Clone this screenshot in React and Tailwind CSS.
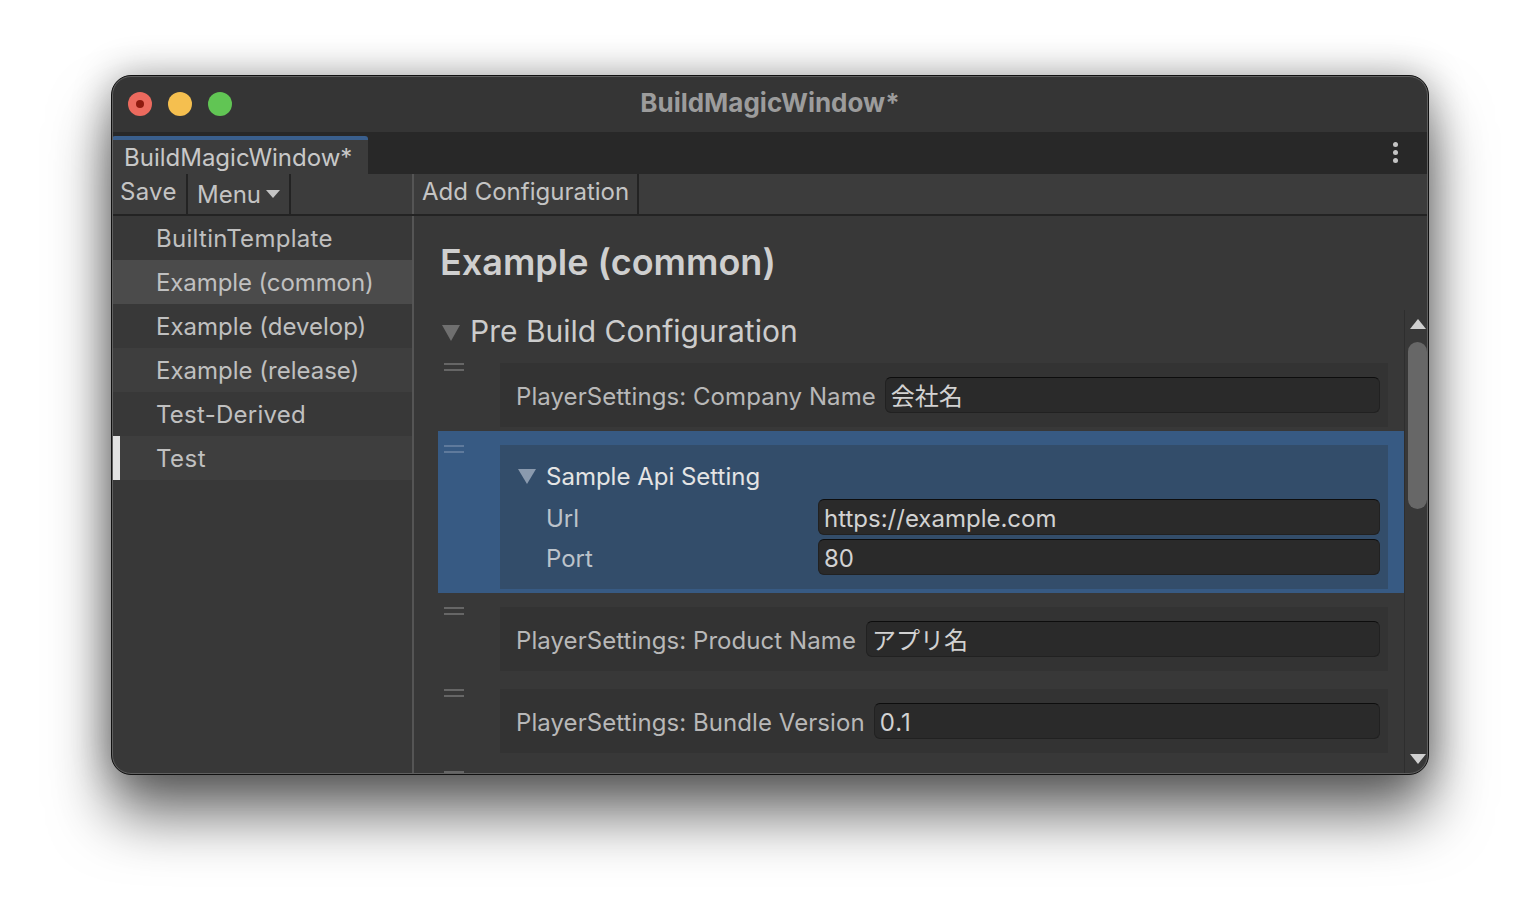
const templates = [
  { name: 'BuiltinTemplate', bg: 'bg-[#383838]', track: 'tracking-[0.3px]' },
  { name: 'Example (common)', bg: 'bg-[#4b4b4b]', track: 'tracking-[-0.1px]' },
  { name: 'Example (develop)', bg: 'bg-[#383838]', track: '' },
  { name: 'Example (release)', bg: 'bg-[#3e3e3e]', track: '' },
  { name: 'Test-Derived', bg: 'bg-[#383838]', track: 'tracking-[0.25px]' },
  { name: 'Test', bg: 'bg-[#3e3e3e]', track: 'tracking-[0.5px]', marked: true },
]

function Triangle({ className }) {
  return (
    <svg viewBox="0 0 18 16" preserveAspectRatio="none" className={className}>
      <path d="M0 0H18L9 16Z" fill="currentColor" />
    </svg>
  )
}

function Handle() {
  return (
    <div className="w-[20px] flex flex-col gap-[4px]">
      <div className="h-[2px] bg-[#666666]" />
      <div className="h-[2px] bg-[#666666]" />
    </div>
  )
}

function TextField({ value, className = '' }) {
  return (
    <div className={`h-[36px] rounded-[6px] bg-[#2a2a2a] border border-[#212121] border-t-[#0d0d0d] px-[5px] pt-[4px] flex items-center text-[#d2d2d2] ${className}`}>
      {value}
    </div>
  )
}

function SettingRow({ label, value, mt, valueClass, labelGap = 'mr-[9px]' }) {
  return (
    <div className={`flex ${mt}`}>
      <div className="w-[62px] pl-[6px] shrink-0">
        <Handle />
      </div>
      <div className="w-[888px] h-[64px] bg-[#333333] flex items-center pl-[16px] pr-[8px]">
        <span className={`text-[#b8b8b8] whitespace-nowrap pt-[4px] tracking-[0.07px] ${labelGap}`}>{label}</span>
        <TextField value={value} className={`flex-1 ${valueClass}`} />
      </div>
    </div>
  )
}

export default function App() {
  return (
    <div
      className="h-[922px] bg-white pt-[75px] pl-[111px] text-[24px] leading-none"
      style={{ fontFamily: 'Inter, "Noto Sans CJK JP", sans-serif' }}
    >
      <div className="relative w-[1318px] h-[700px] rounded-[20px] bg-[#383838] border border-[#111111] overflow-hidden flex flex-col shadow-[0_40px_60px_rgba(0,0,0,0.58),0_0_38px_rgba(0,0,0,0.32)]">
        {/* title bar */}
        <div className="relative h-[56px] shrink-0 bg-[#353535] flex items-center pl-[16px] gap-[16px]">
          <div className="w-[24px] h-[24px] rounded-full bg-[#ec6a5e] flex items-center justify-center">
            <div className="w-[8px] h-[8px] rounded-full bg-[#8f1a0f]" />
          </div>
          <div className="w-[24px] h-[24px] rounded-full bg-[#f5bf4f]" />
          <div className="w-[24px] h-[24px] rounded-full bg-[#61c554]" />
          <div className="absolute inset-x-0 top-[14px] text-center text-[26px] font-bold text-[#9c9c9c]">
            BuildMagicWindow*
          </div>
        </div>

        {/* tab strip */}
        <div className="h-[42px] shrink-0 bg-[#282828] flex items-end justify-between">
          <div className="w-[256px] h-[38px] bg-[#3c3c3c] border-t-[4px] border-[#3a5f8d] rounded-t-[3px] pl-[12px] pt-[6px] text-[#c8c8c8] whitespace-nowrap">
            BuildMagicWindow*
          </div>
          <div className="flex flex-col gap-[3px] mr-[30px] mb-[11px]">
            <div className="w-[5px] h-[5px] rounded-full bg-[#c4c4c4]" />
            <div className="w-[5px] h-[5px] rounded-full bg-[#c4c4c4]" />
            <div className="w-[5px] h-[5px] rounded-full bg-[#c4c4c4]" />
          </div>
        </div>

        {/* toolbar */}
        <div className="h-[42px] shrink-0 bg-[#3c3c3c] border-b-2 border-[#232323] flex text-[#c4c4c4]">
          <div className="w-[300px] flex shrink-0">
            <div className="w-[76px] pl-[8px] pt-[6px] border-r-2 border-[#232323] tracking-[0.3px]">Save</div>
            <div className="w-[103px] pl-[9px] pt-[9px] border-r-2 border-[#232323] flex">
              <span>Menu</span>
              <Triangle className="w-[14px] h-[8px] ml-[5px] mt-[7px] text-[#c4c4c4]" />
            </div>
          </div>
          <div className="w-[2px] bg-[#555555]" />
          <div className="w-[225px] pl-[8px] pt-[6px] border-r-2 border-[#232323] whitespace-nowrap">Add Configuration</div>
        </div>

        <div className="flex-1 min-h-0 flex">
          {/* template list */}
          <div className="w-[300px] shrink-0 text-[#c0c0c0]">
            {templates.map((t) => (
              <div key={t.name} className={`h-[44px] flex items-center ${t.bg} ${t.track}`}>
                <div className={`w-[8px] h-full mr-[36px] ${t.marked ? 'bg-[#e2e2e2]' : ''}`} />
                <span className="pt-[2px]">{t.name}</span>
              </div>
            ))}
          </div>
          <div className="w-[2px] shrink-0 bg-[#555555]" />

          {/* configuration pane */}
          <div className="flex-1 min-w-0 overflow-hidden">
            <div className="pl-[26px] pt-[28px] h-[94px] text-[36px] font-semibold text-[#cfcfcf] whitespace-nowrap">
              Example (common)
            </div>
            <div className="flex">
              <div className="w-[990px] shrink-0">
                <div className="h-[53px] flex items-start pl-[28px] pt-[6px] text-[#cccccc] text-[30px]">
                  <Triangle className="w-[18px] h-[16px] mt-[9px] mr-[10px] text-[#6f6f6f]" />
                  <span className="whitespace-nowrap">Pre Build Configuration</span>
                </div>
                <div className="pl-[24px]">
                  <SettingRow label="PlayerSettings: Company Name" value="会社名" />
                  <div className="mt-[4px] w-[966px] h-[162px] bg-[#375a83] flex">
                    <div className="w-[62px] pl-[6px] pt-[14px] shrink-0">
                      <div className="w-[20px] flex flex-col gap-[4px]">
                        <div className="h-[2px] bg-[#5f7a9c]" />
                        <div className="h-[2px] bg-[#5f7a9c]" />
                      </div>
                    </div>
                    <div className="w-[888px] h-[144px] mt-[14px] bg-[#334d6a] pl-[18px] pr-[8px] pt-[18px]">
                      <div className="flex items-start h-[36px] text-[#e4e4e4]">
                        <Triangle className="w-[18px] h-[15px] mt-[6px] mr-[10px] text-[#8a9aae]" />
                        <span className="pt-[2px]">Sample Api Setting</span>
                      </div>
                      <div className="flex items-center text-[#bcc3cb]">
                        <span className="w-[300px] pl-[28px] pt-[4px] shrink-0">Url</span>
                        <TextField value="https://example.com" className="flex-1" />
                      </div>
                      <div className="flex items-center text-[#bcc3cb] mt-[4px]">
                        <span className="w-[300px] pl-[28px] pt-[4px] shrink-0">Port</span>
                        <TextField value="80" className="flex-1" />
                      </div>
                    </div>
                  </div>
                  <SettingRow mt="mt-[14px]" label="PlayerSettings: Product Name" value="アプリ名" labelGap="mr-[10px]" />
                  <SettingRow mt="mt-[18px]" label="PlayerSettings: Bundle Version" value="0.1" valueClass="tracking-[1px]" />
                  <div className="mt-[18px] pl-[6px]">
                    <Handle />
                  </div>
                </div>
              </div>

              {/* scrollbar */}
              <div className="w-[24px] h-[465px] border-l border-[#2e2e2e] bg-[#383838] flex flex-col items-center pl-[3px] pr-[1px] pt-[9px]">
                <Triangle className="w-[16px] h-[10px] rotate-180 text-[#d0d0d0] shrink-0" />
                <div className="w-full h-[167px] mt-[13px] rounded-full bg-[#676767] shrink-0" />
                <Triangle className="w-[16px] h-[10px] mt-[245px] text-[#d0d0d0] shrink-0" />
              </div>
            </div>
          </div>
        </div>

        {/* window edge highlight */}
        <div className="absolute inset-0 rounded-[19px] border border-[#606060] pointer-events-none" />
      </div>
    </div>
  )
}
